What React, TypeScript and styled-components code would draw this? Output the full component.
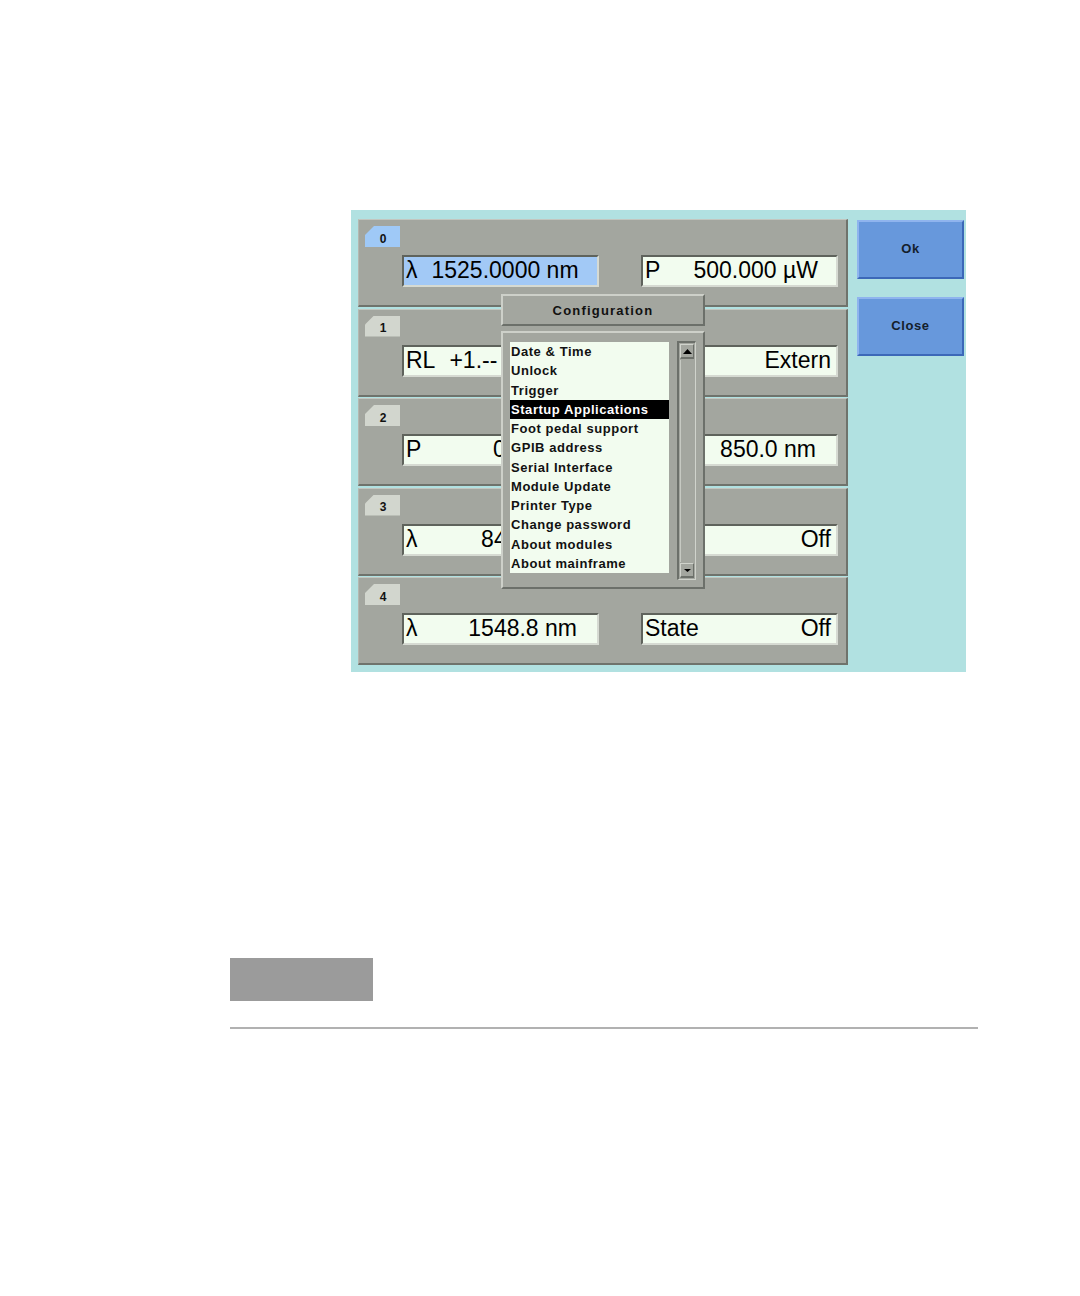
import styled, { createGlobalStyle, css } from 'styled-components';

const GlobalStyle = createGlobalStyle`
    html, body {
        margin: 0;
        padding: 0;
        background: #ffffff;
    }
    body {
        font-family: 'Liberation Sans', Arial, sans-serif;
    }
`;

interface IfieldData {
    label: string;
    value: string;
    pad: number;
    selected?: boolean;
    start?: boolean;
}

interface Imodule {
    slot: string;
    left: IfieldData;
    right: IfieldData;
}

// the right-hand labels of rows 1-3 sit under the dialog, so they are left empty
const modules: Imodule[] = [
    {
        slot: '0',
        left: { label: 'λ', value: '1525.0000 nm', pad: 20, selected: true },
        right: { label: 'P', value: '500.000 µW', pad: 18 },
    },
    {
        slot: '1',
        left: { label: 'RL', value: '+1.--', pad: 10, start: true },
        right: { label: '', value: 'Extern', pad: 5 },
    },
    {
        slot: '2',
        left: { label: 'P', value: '0.00 mW', pad: 12 },
        right: { label: '', value: '850.0 nm', pad: 20 },
    },
    {
        slot: '3',
        left: { label: 'λ', value: '845.0 nm', pad: 20 },
        right: { label: '', value: 'Off', pad: 5 },
    },
    {
        slot: '4',
        left: { label: 'λ', value: '1548.8 nm', pad: 20 },
        right: { label: 'State', value: 'Off', pad: 5 },
    },
];

const menuItems = [
    'Date & Time',
    'Unlock',
    'Trigger',
    'Startup Applications',
    'Foot pedal support',
    'GPIB address',
    'Serial Interface',
    'Module Update',
    'Printer Type',
    'Change password',
    'About modules',
    'About mainframe',
];

const Field = ({ label, value, pad, selected, start }: IfieldData) => (
    <FieldBox selected={selected} start={start} style={{ paddingRight: pad }}>
        <span>{label}</span>
        <span>{value}</span>
    </FieldBox>
);

export default function App() {
    return (
        <>
            <GlobalStyle />
            <Page>
                <Screen>
                    <ModuleColumn>
                        {modules.map(m => (
                            <Panel key={m.slot}>
                                <Tab active={m.slot === '0'}>{m.slot}</Tab>
                                <FieldRow>
                                    <Field {...m.left} />
                                    <Field {...m.right} />
                                </FieldRow>
                            </Panel>
                        ))}
                    </ModuleColumn>
                    <ButtonColumn>
                        <SoftButton>Ok</SoftButton>
                        <SoftButton>Close</SoftButton>
                    </ButtonColumn>

                    <Dialog>
                        <DialogTitle>Configuration</DialogTitle>
                        <ListFrame>
                            <List>
                                {menuItems.map(item => (
                                    <ListItem key={item} active={item === 'Startup Applications'}>
                                        {item}
                                    </ListItem>
                                ))}
                            </List>
                            <ScrollBar>
                                <ArrowButton>
                                    <svg width="9" height="5" viewBox="0 0 9 5">
                                        <path d="M0 5 L4.5 0 L9 5 Z" fill="#000" />
                                    </svg>
                                </ArrowButton>
                                <Track />
                                <ArrowButton>
                                    <svg width="7" height="3" viewBox="0 0 7 3">
                                        <path d="M0 0 L7 0 L3.5 3 Z" fill="#000" />
                                    </svg>
                                </ArrowButton>
                            </ScrollBar>
                        </ListFrame>
                    </Dialog>
                </Screen>

                <Footer>
                    <GreyBlock />
                    <Rule />
                </Footer>
            </Page>
        </>
    );
}

const Page = styled.div`
    width: 1080px;
    height: 1296px;
    padding-top: 210px;
    box-sizing: border-box;
    background: #ffffff;
`;

const Screen = styled.div`
    position: relative;
    margin-left: 351px;
    width: 615px;
    height: 462px;
    box-sizing: border-box;
    padding: 9px 0 0 7px;
    background: #b1e1e1;
    display: flex;
    align-items: flex-start;
`;

const ModuleColumn = styled.div`
    width: 490px;
    display: flex;
    flex-direction: column;
    gap: 1.5px;
`;

const Panel = styled.div`
    height: 88px;
    box-sizing: border-box;
    background: #a3a69f;
    border-top: 1px solid #c3c6bf;
    border-left: 1px solid #b4b7b0;
    border-right: 2px solid #6f736c;
    border-bottom: 2px solid #6f736c;
    padding: 6px 0 0 6px;
`;

const Tab = styled.div<{ active: boolean }>`
    width: 35px;
    height: 21px;
    display: flex;
    align-items: center;
    justify-content: center;
    padding: 4px 0 0 1px;
    box-sizing: border-box;
    font-size: 12px;
    font-weight: 700;
    color: #111;
    background: ${p => (p.active ? '#9fc9f7' : '#d2d6ce')};
    clip-path: polygon(9px 0, 100% 0, 100% 100%, 0 100%, 0 9px);
`;

const FieldRow = styled.div`
    margin-top: 8px;
    padding-left: 37px;
    display: flex;
    gap: 42px;
`;

const FieldBox = styled.div<{ selected?: boolean; start?: boolean }>`
    width: 197px;
    height: 32px;
    box-sizing: border-box;
    display: flex;
    align-items: center;
    justify-content: ${p => (p.start ? 'flex-start' : 'space-between')};
    gap: 14px;
    padding-left: 2px;
    padding-bottom: 1px;
    background: #f2fcef;
    border-top: 2px solid #5f635c;
    border-left: 2px solid #5f635c;
    border-bottom: 2px solid #d6dad2;
    border-right: 2px solid #d6dad2;
    font-size: 23px;
    color: #000;
    white-space: nowrap;
    overflow: hidden;
    ${p =>
        p.selected &&
        css`
            background: #a2c9f6;
        `}
`;

const ButtonColumn = styled.div`
    margin-left: 9px;
    margin-top: 1px;
    display: flex;
    flex-direction: column;
    gap: 18px;
`;

const SoftButton = styled.div`
    width: 107px;
    height: 59px;
    box-sizing: border-box;
    display: flex;
    align-items: center;
    justify-content: center;
    padding-bottom: 2px;
    background: #6798dc;
    border-top: 2px solid #8fb4ee;
    border-left: 2px solid #8fb4ee;
    border-bottom: 2px solid #3c68b8;
    border-right: 2px solid #3c68b8;
    font-size: 13px;
    font-weight: 700;
    letter-spacing: 0.6px;
    color: #14202c;
`;

const Dialog = styled.div`
    position: absolute;
    left: 150px;
    top: 84px;
    width: 204px;
    display: flex;
    flex-direction: column;
    gap: 5px;
`;

const DialogTitle = styled.div`
    height: 32px;
    box-sizing: border-box;
    display: flex;
    align-items: center;
    justify-content: center;
    padding-top: 1px;
    background: #a3a69f;
    border-top: 2px solid #cdd0c9;
    border-left: 2px solid #cdd0c9;
    border-bottom: 2px solid #6c706a;
    border-right: 2px solid #6c706a;
    font-size: 13px;
    font-weight: 700;
    letter-spacing: 1.2px;
    color: #111;
`;

const ListFrame = styled.div`
    height: 258px;
    box-sizing: border-box;
    display: flex;
    align-items: flex-start;
    padding: 9px 0 0 7px;
    background: #a3a69f;
    border-top: 2px solid #cdd0c9;
    border-left: 2px solid #cdd0c9;
    border-bottom: 2px solid #6c706a;
    border-right: 2px solid #6c706a;
`;

const List = styled.div`
    width: 159px;
    height: 231px;
    background: #f2fcef;
    display: flex;
    flex-direction: column;
`;

const ListItem = styled.div<{ active: boolean }>`
    height: 19.25px;
    line-height: 19.25px;
    padding-left: 1px;
    font-size: 13px;
    font-weight: 700;
    letter-spacing: 0.55px;
    white-space: nowrap;
    overflow: hidden;
    color: #111;
    ${p =>
        p.active &&
        css`
            background: #000;
            color: #fff;
        `}
`;

const ScrollBar = styled.div`
    margin-left: 8px;
    margin-top: -1px;
    width: 19px;
    height: 239px;
    box-sizing: border-box;
    display: flex;
    flex-direction: column;
    padding: 1px;
    background: #a3a69f;
    border-top: 2px solid #6c706a;
    border-left: 2px solid #6c706a;
    border-bottom: 1px solid #d0d3cc;
    border-right: 1px solid #d0d3cc;
`;

const ArrowButton = styled.div`
    height: 15px;
    box-sizing: border-box;
    display: flex;
    align-items: center;
    justify-content: center;
    background: #a3a69f;
    border-top: 1px solid #d0d3cc;
    border-left: 1px solid #d0d3cc;
    border-bottom: 2px solid #6c706a;
    border-right: 1px solid #6c706a;
`;

const Track = styled.div`
    flex: 1;
    border-left: 1px solid #c6c9c2;
    margin: 1px 0;
`;

const Footer = styled.div`
    margin-top: 286px;
    margin-left: 230px;
`;

const GreyBlock = styled.div`
    width: 143px;
    height: 43px;
    background: #9b9b9b;
`;

const Rule = styled.div`
    margin-top: 26px;
    width: 748px;
    height: 2px;
    background: #b1b1b1;
`;
